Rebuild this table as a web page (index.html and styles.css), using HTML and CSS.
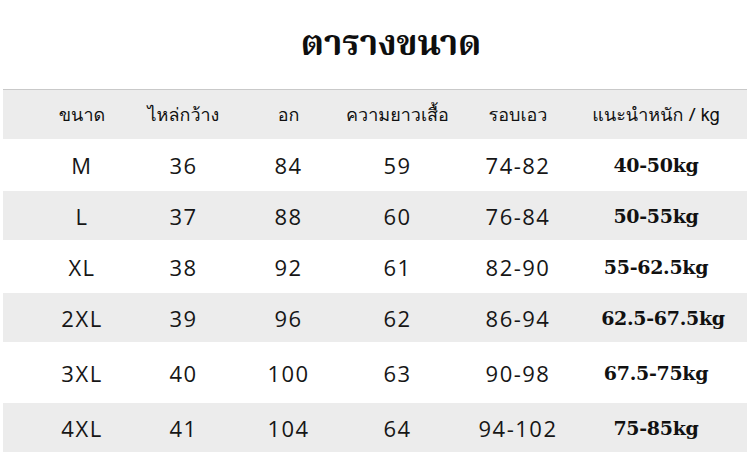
FILE: index.html
```html
<!DOCTYPE html>
<html lang="th">
<head>
<meta charset="utf-8">
<title>ตารางขนาด</title>
<link rel="stylesheet" href="styles.css">
</head>
<body>
<div class="page">
  <h1 class="title">ตารางขนาด</h1>
  <div class="table">
    <div class="row head">
      <div class="cell c1">ขนาด</div>
      <div class="cell">ไหล่กว้าง</div>
      <div class="cell">อก</div>
      <div class="cell">ความยาวเสื้อ</div>
      <div class="cell">รอบเอว</div>
      <div class="cell c6">แนะนำหนัก / kg</div>
    </div>
    <div class="row r1">
      <div class="cell c1">M</div><div class="cell">36</div><div class="cell">84</div><div class="cell">59</div><div class="cell">74-82</div><div class="cell c6 wt">40-50kg</div>
    </div>
    <div class="row r2 alt">
      <div class="cell c1">L</div><div class="cell">37</div><div class="cell">88</div><div class="cell">60</div><div class="cell">76-84</div><div class="cell c6 wt">50-55kg</div>
    </div>
    <div class="row r3">
      <div class="cell c1">XL</div><div class="cell">38</div><div class="cell">92</div><div class="cell">61</div><div class="cell">82-90</div><div class="cell c6 wt">55-62.5kg</div>
    </div>
    <div class="row r4 alt">
      <div class="cell c1">2XL</div><div class="cell">39</div><div class="cell">96</div><div class="cell">62</div><div class="cell">86-94</div><div class="cell c6 wt">62.5-67.5kg</div>
    </div>
    <div class="row r5">
      <div class="cell c1">3XL</div><div class="cell">40</div><div class="cell">100</div><div class="cell">63</div><div class="cell">90-98</div><div class="cell c6 wt">67.5-75kg</div>
    </div>
    <div class="row r6 alt">
      <div class="cell c1">4XL</div><div class="cell">41</div><div class="cell">104</div><div class="cell">64</div><div class="cell">94-102</div><div class="cell c6 wt">75-85kg</div>
    </div>
  </div>
</div>
</body>
</html>
```

FILE: styles.css
```css
html, body {
  margin: 0;
  padding: 0;
  background: #ffffff;
}
.page {
  width: 750px;
  height: 476px;
  padding: 0 3px;
  box-sizing: border-box;
  font-family: "Open Sans", "Noto Sans Thai", "Loma", "Garuda", "DejaVu Sans", sans-serif;
  color: #161616;
}
.title {
  margin: 0;
  height: 89px;
  display: flex;
  align-items: center;
  justify-content: center;
  padding-left: 32px;
  padding-top: 2px;
  box-sizing: border-box;
  font-family: "Norasi", "Noto Serif Thai", "Tlwg Typo", "DejaVu Serif", serif;
  font-size: 35px;
  font-weight: bold;
  color: #0e0e0e;
}
.table {
  display: flex;
  flex-direction: column;
}
.row {
  display: grid;
  grid-template-columns: 129px 103px 107px 111px 130px 164px;
  align-items: center;
  font-size: 22px;
  letter-spacing: 1.5px;
}
.cell {
  text-align: center;
}
.c1 { padding-left: 29px; }
.c6 { padding-right: 18px; }
.head {
  height: 50px;
  background: #ececec;
  border-top: 1px solid #c9c9c9;
  box-sizing: border-box;
  font-size: 18px;
  letter-spacing: 0;
  color: #111;
  font-family: "Loma", "Garuda", "Noto Sans Thai", "DejaVu Sans", sans-serif;
}
.alt { background: #ececec; }
.r1 { height: 52px; }
.r2 { height: 49px; }
.r3 { height: 53px; }
.r4 { height: 49px; }
.r5 { height: 61px; }
.r6 { height: 49px; }
.wt {
  font-family: "DejaVu Serif", "Liberation Serif", serif;
  font-weight: bold;
  font-size: 19px;
  letter-spacing: -0.3px;
  color: #111;
}
.r4 .wt { padding-right: 4px; }
```
